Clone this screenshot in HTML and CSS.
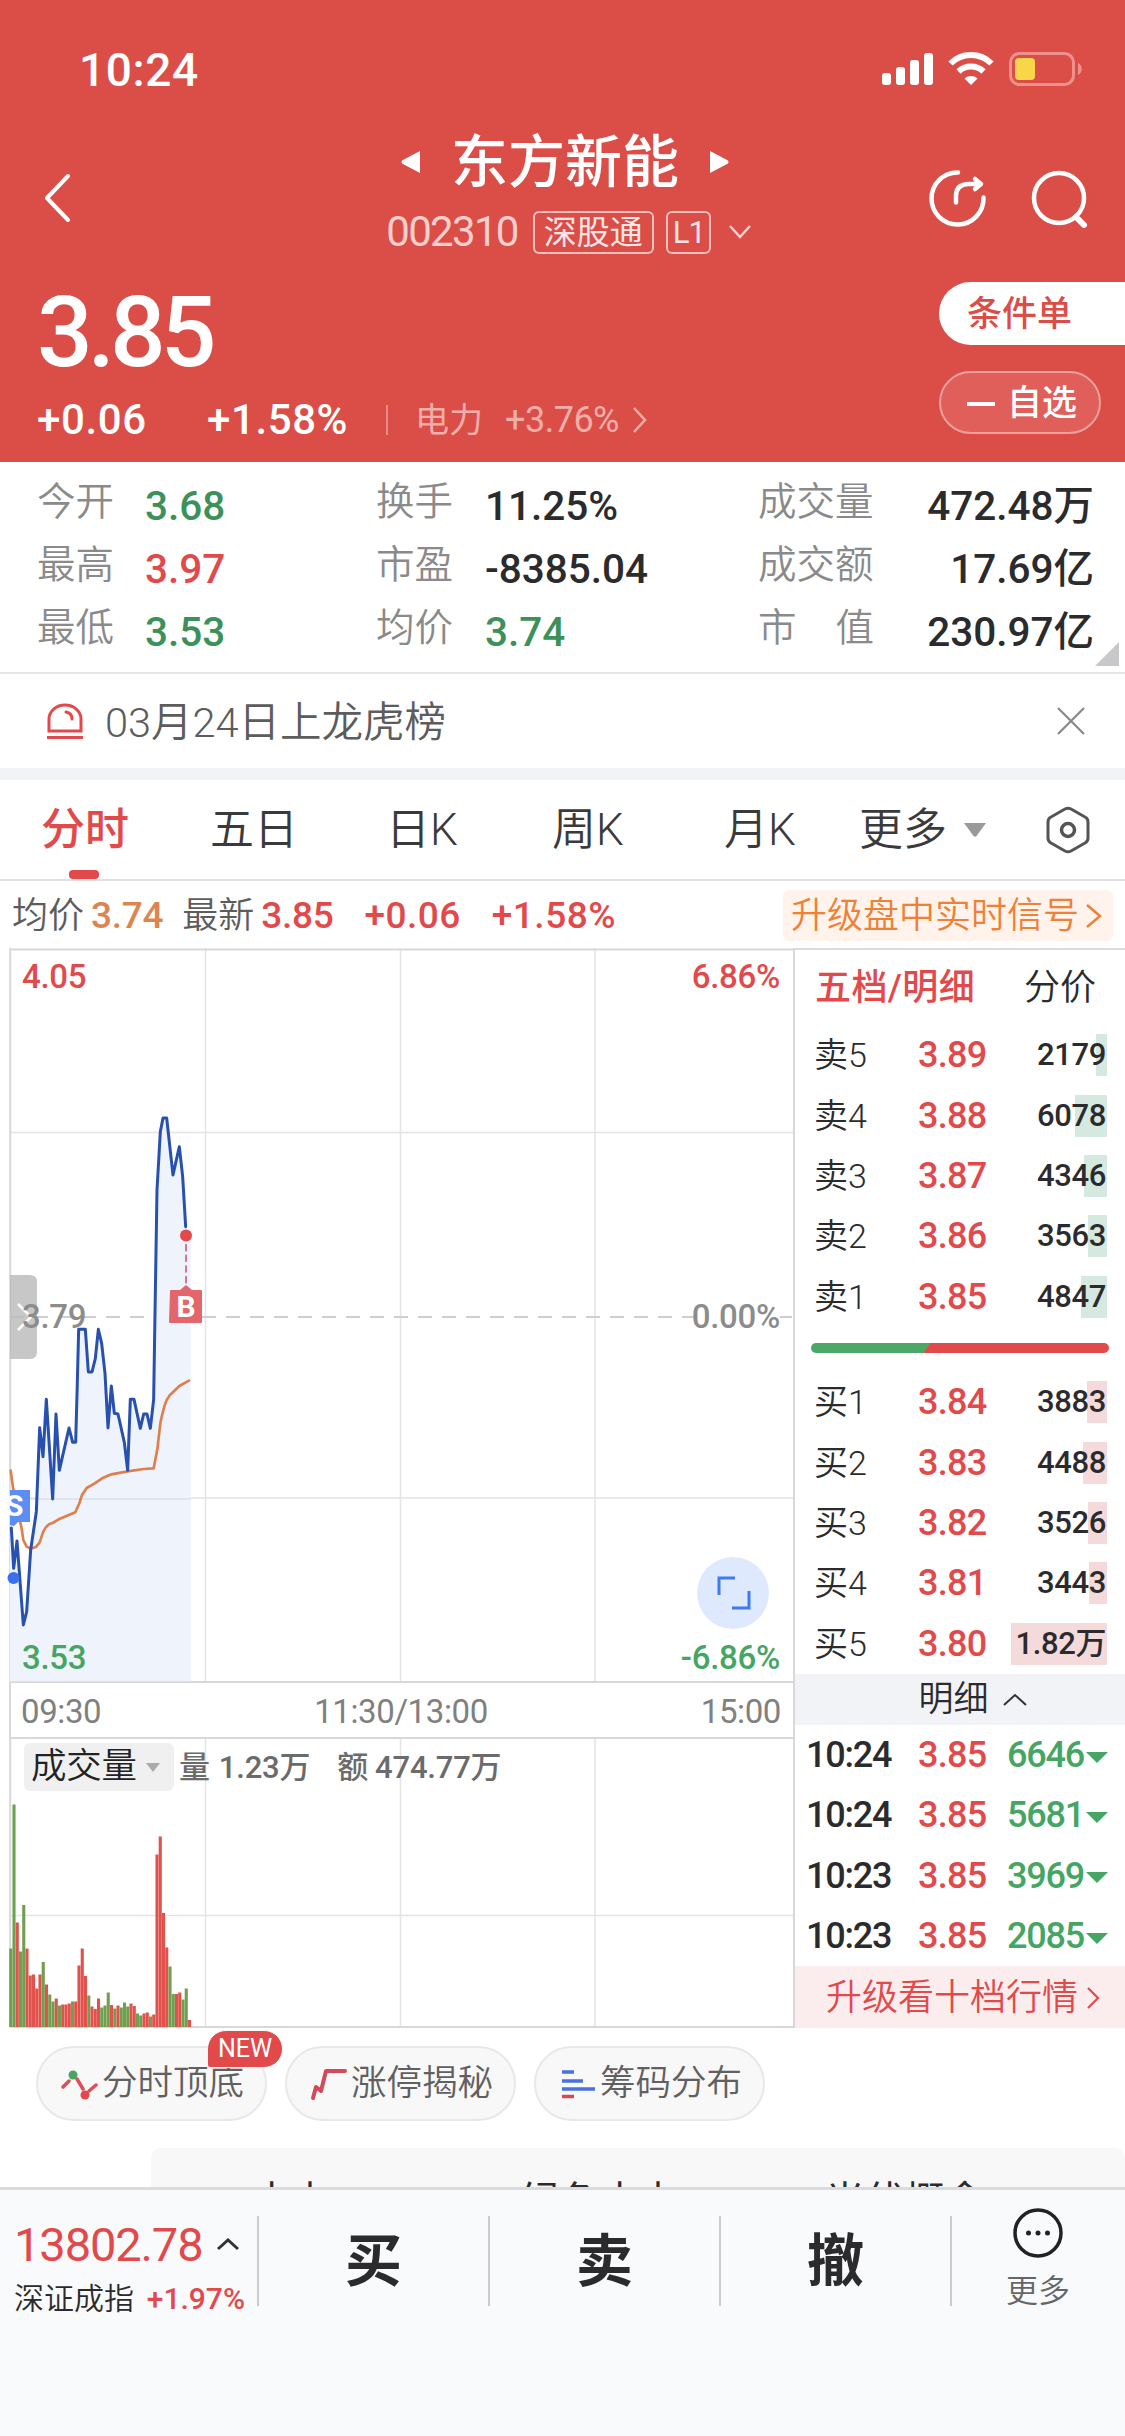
FILE: index.html
```html
<!DOCTYPE html>
<html lang="zh-CN">
<head>
    <meta charset="UTF-8">
    <meta name="viewport" content="width=device-width, initial-scale=1.0">
    <title>东方新能 002310</title>
    <link rel="stylesheet" href="styles.css">
</head>
<body>
    <header class="header">
        <div class="status">
            <span class="clock">10:24</span>
            <svg class="status-icons" width="204" height="36" viewBox="0 0 204 36">
                <g fill="#fff">
                    <rect x="2" y="21" width="9" height="12" rx="3"/>
                    <rect x="16" y="15" width="9" height="18" rx="3"/>
                    <rect x="30" y="8" width="9" height="25" rx="3"/>
                    <rect x="44" y="1" width="9" height="32" rx="3"/>
                    <path d="M91 33l-6.500-6.500a10 10 0 0 1 13 0z"/>
                </g>
                <path d="M78.500 19.500a18 18 0 0 1 25 0M70.500 11.500a29 29 0 0 1 41 0" fill="none" stroke="#fff" stroke-width="6"/>
                <rect x="130.500" y="1.500" width="63" height="31" rx="9" fill="none" stroke="#ee918c" stroke-width="3"/>
                <rect x="135" y="6" width="20" height="22" rx="4" fill="#f7d64a"/>
                <path d="M198 11c5 2 5 10 0 12z" fill="#ee918c"/>
            </svg>
        </div>
        <div class="nav">
            <svg class="back" width="30" height="50" viewBox="0 0 30 50"><path d="M26 3L5 25l21 22" fill="none" stroke="#fff" stroke-width="4" stroke-linecap="round" stroke-linejoin="round"/></svg>
            <div class="title">
                <div class="title-row">
                    <svg width="20" height="26" viewBox="0 0 20 26"><path d="M19 2v22L1 14.500q-1-1.500 0-3z" fill="#fff"/></svg>
                    <h1>东方新能</h1>
                    <svg width="20" height="26" viewBox="0 0 20 26"><path d="M1 2v22l18-9.500q1-1.500 0-3z" fill="#fff"/></svg>
                </div>
                <div class="code-row">
                    <span class="code">002310</span>
                    <span class="tag">深股通</span>
                    <span class="tag tag-level">L1</span>
                    <svg width="24" height="16" viewBox="0 0 24 16"><path d="M2 2l10 11L22 2" fill="none" stroke="#f6d0ce" stroke-width="2.500"/></svg>
                </div>
            </div>
            <div class="nav-icons">
                <svg width="60" height="60" viewBox="0 0 60 60" fill="none" stroke="#fff" stroke-width="4.500" stroke-linecap="round" stroke-linejoin="round">
                    <path d="M30 4.500A26 26 0 1 0 55.500 29.500M28 34.500V28q0-12 13-12h9M47 11l6 5-6 5"/>
                </svg>
                <svg width="60" height="60" viewBox="0 0 60 60" fill="none" stroke="#fff" stroke-width="4.500" stroke-linecap="round">
                    <circle cx="29" cy="30" r="25"/><path d="M46 49l8 8" stroke-width="6"/>
                </svg>
            </div>
        </div>
        <div class="quote">
            <div class="quote-main">
                <div class="price">3.85</div>
                <div class="change">
                    <span class="diff">+0.06</span>
                    <span class="pct">+1.58%</span>
                    <span class="sector">电力</span>
                    <span class="sector-pct">+3.76%</span>
                    <svg width="16" height="30" viewBox="0 0 16 30"><path d="M2 3l11 12L2 27" fill="none" stroke="#efaeaa" stroke-width="2.500"/></svg>
                </div>
            </div>
            <div class="quote-actions">
                <div class="pill pill-solid">条件单</div>
                <div class="pill pill-line"><i class="minus"></i>自选</div>
            </div>
        </div>
    </header>

    <section class="stats">
        <span class="k">今开</span><span class="v green">3.68</span>
        <span class="k">换手</span><span class="v">11.25%</span>
        <span class="k">成交量</span><span class="v right">472.48万</span>
        <span class="k">最高</span><span class="v red">3.97</span>
        <span class="k">市盈</span><span class="v">-8385.04</span>
        <span class="k">成交额</span><span class="v right">17.69亿</span>
        <span class="k">最低</span><span class="v green">3.53</span>
        <span class="k">均价</span><span class="v green">3.74</span>
        <span class="k spread"><b>市</b><b>值</b></span><span class="v right">230.97亿</span>
        <i class="corner"></i>
    </section>

    <section class="notice">
        <svg width="38" height="38" viewBox="0 0 38 38" fill="none" stroke="#e2494b" stroke-width="3">
            <path d="M3 29V17a16 14 0 0 1 32 0v12zM1 35.500h36"/><path d="M20 10q6 1 6 7" stroke-linecap="round"/>
        </svg>
        <span class="notice-text">03月24日上龙虎榜</span>
        <svg width="28" height="28" viewBox="0 0 28 28"><path d="M1 1l26 26M27 1L1 27" stroke="#888" stroke-width="2.200"/></svg>
    </section>

    <nav class="tabs">
        <span class="tab active">分时</span>
        <span class="tab">五日</span>
        <span class="tab">日K</span>
        <span class="tab">周K</span>
        <span class="tab">月K</span>
        <span class="tab more">更多<svg width="22" height="14" viewBox="0 0 22 14"><path d="M0 0h22L12.500 13q-1.500 1.500-3 0z" fill="#999"/></svg></span>
        <svg class="gear" width="44" height="48" viewBox="0 0 44 48" fill="none" stroke="#555" stroke-width="3" stroke-linejoin="round">
            <path d="M19 3q3-1.500 6 0l14 8q3 1.500 3 5v16q0 3.500-3 5l-14 8q-3 1.500-6 0L5 37q-3-1.500-3-5V16q0-3.500 3-5z"/><circle cx="22" cy="24" r="6.500" stroke-width="3.500"/>
        </svg>
    </nav>

    <section class="summary">
        <span class="sk">均价</span><span class="sv orange">3.74</span>
        <span class="sk">最新</span><span class="sv red">3.85</span>
        <span class="sv red gap">+0.06</span>
        <span class="sv red gap">+1.58%</span>
        <span class="signal">升级盘中实时信号<svg width="18" height="26" viewBox="0 0 18 26"><path d="M2 2l13 11L2 24" fill="none" stroke="#ee8136" stroke-width="2.500"/></svg></span>
    </section>

    <main class="market">
        <div class="charts">
            <svg class="plot" width="795" height="735" viewBox="0 0 795 735">
                <g stroke="#e4e4e6" stroke-width="1.500">
                    <path d="M205.500 0v735M400.500 0v735M595 0v735M10 184.500h784M10 550h784"/>
                    <path d="M10 1.500h784M10.200 0v735M10 734h784M794 0v735" stroke="#d8d8da" stroke-width="2"/>
                </g>
                <path d="M10 369h784" stroke="#cfcfd2" stroke-width="1.800" stroke-dasharray="14 10"/>
                <!-- price series, in thirds of a pixel -->
                <g transform="scale(.33333)" fill="none" stroke-linejoin="round" stroke-linecap="round">
                    <path d="M30 1560 35 1746 41 1861 51 1779 70 2031 80 1991 92 1806 109 1691 119 1439 129 1526 139 1354 158 1653 168 1398 178 1567 207 1440 218 1483 227 1483 231 1340 236 1144H256L265 1272H276L286 1231 295 1144 305 1186 315 1276 324 1440 334 1314 343 1396 354 1398 373 1483 383 1567 391 1354H402L421 1441 431 1398H441L451 1441 461 1354 465 1096 471 726 481 551 489 510H500L519 681 538 596 548 686 557 836 572 860V2200H30z" fill="#eef3fc"/>
                    <path d="M30 1653H572" stroke="#dcdfe6" stroke-width="4"/>
                    <path d="M32 1568 39 1618 52 1690 64 1736 70 1776 80 1796 92 1802 109 1796 119 1783 129 1753Q137 1735 147 1729L158 1725 176 1714 226 1693 238 1666 246 1641 260 1620 284 1606 310 1589 334 1579 383 1570 431 1563 461 1561 472 1504 481 1426Q490 1380 500 1356L510 1341 538 1314 567 1298" stroke="#e17e4e" stroke-width="8"/>
                    <path d="M34 1740 41 1861 51 1779 70 2031 80 1991 92 1806 109 1691 119 1439 129 1526 139 1354 158 1653 168 1398 178 1567 207 1440 218 1483 227 1483 231 1340 236 1144H256L265 1272H276L286 1231 295 1144 305 1186 315 1276 324 1440 334 1314 343 1396 354 1398 373 1483 383 1567 391 1354H402L421 1441 431 1398H441L451 1441 461 1354 465 1096 471 726 481 551 489 510H500L519 681 538 596 548 686 557 836" stroke="#2850ae" stroke-width="9"/>
                    <path d="M558 890V1010" stroke="#d05c82" stroke-width="5" stroke-dasharray="18 14"/>
                </g>
                <circle cx="186" cy="287.500" r="6" fill="#e2494b"/>
                <path d="M170 343q0-1 1-1h9l6-5 6 5h9q1 0 1 1v31q0 1-1 1h-31q-1 0-1-1z" fill="#e4666d"/>
                <text class="mark" x="186" y="369" text-anchor="middle">B</text>
                <path d="M10 542h20v32H18l-4 4-4-1z" fill="#5b8df2"/>
                <svg x="9" y="540" width="30" height="40"><text class="mark" x="-4" y="28">S</text></svg>
                <circle cx="13.500" cy="630" r="6" fill="#3a70ee"/>
                <path d="M10 327h20q7 0 7 7v70q0 7-7 7H10z" fill="#b9b9b9" opacity=".8"/>
                <path d="M18 356l13 13-13 13" fill="none" stroke="#fff" stroke-width="2.500"/>
                <g class="axis">
                    <text x="22" y="40" class="fill-red">4.05</text>
                    <text x="780" y="40" class="fill-red" text-anchor="end">6.86%</text>
                    <text x="22" y="380">3.79</text>
                    <rect x="698" y="362" width="82" height="14" fill="#fff"/>
                    <text x="780" y="380" text-anchor="end">0.00%</text>
                    <text x="22" y="721" class="fill-green">3.53</text>
                    <text x="780" y="721" class="fill-green" text-anchor="end">-6.86%</text>
                </g>
                <circle cx="733" cy="645" r="36" fill="#dfe9fd"/>
                <path d="M719 647v-17h16M732 660h17v-17" fill="none" stroke="#3f7bf0" stroke-width="3"/>
            </svg>
            <div class="times"><span>09:30</span><span>11:30/13:00</span><span>15:00</span></div>
            <div class="volume">
                <svg class="plot" width="795" height="291" viewBox="0 0 795 291">
                    <path d="M205.500 0v288M400.500 0v288M595 0v288M10 176.500h784" stroke="#e4e4e6" stroke-width="1.500"/>
                    <path d="M10.200 0v288M10 288h784M794 0v289" stroke="#d8d8da" stroke-width="2"/>
                    <g id="bars"></g>
                </svg>
                <div class="volume-head">
                    <span class="picker">成交量<svg width="14" height="9" viewBox="0 0 14 9"><path d="M0 0h14L7 9z" fill="#aaa"/></svg></span>
                    <span>量</span><span class="n1">1.23万</span><span class="n2">额</span><span>474.77万</span>
                </div>
            </div>
        </div>

        <aside class="book">
            <div class="book-head"><b>五档/明细</b><span>分价</span></div>
            <div class="orders sell">
                <div class="row"><span>卖5</span><span class="p">3.89</span><span class="q"><i style="width:11px"></i>2179</span></div>
                <div class="row"><span>卖4</span><span class="p">3.88</span><span class="q"><i style="width:32px"></i>6078</span></div>
                <div class="row"><span>卖3</span><span class="p">3.87</span><span class="q"><i style="width:23px"></i>4346</span></div>
                <div class="row"><span>卖2</span><span class="p">3.86</span><span class="q"><i style="width:19px"></i>3563</span></div>
                <div class="row"><span>卖1</span><span class="p">3.85</span><span class="q"><i style="width:26px"></i>4847</span></div>
            </div>
            <div class="ratio"></div>
            <div class="orders buy">
                <div class="row"><span>买1</span><span class="p">3.84</span><span class="q"><i style="width:20px"></i>3883</span></div>
                <div class="row"><span>买2</span><span class="p">3.83</span><span class="q"><i style="width:24px"></i>4488</span></div>
                <div class="row"><span>买3</span><span class="p">3.82</span><span class="q"><i style="width:19px"></i>3526</span></div>
                <div class="row"><span>买4</span><span class="p">3.81</span><span class="q"><i style="width:18px"></i>3443</span></div>
                <div class="row"><span>买5</span><span class="p">3.80</span><span class="q"><i style="width:96px"></i>1.82万</span></div>
            </div>
            <div class="detail-head">明细<svg width="24" height="13" viewBox="0 0 24 13"><path d="M1 12L12 2l11 10" fill="none" stroke="#333" stroke-width="2"/></svg></div>
            <div class="ticks">
                <div class="row"><span>10:24</span><span class="p">3.85</span><span class="t">6646<i></i></span></div>
                <div class="row"><span>10:24</span><span class="p">3.85</span><span class="t">5681<i></i></span></div>
                <div class="row"><span>10:23</span><span class="p">3.85</span><span class="t">3969<i></i></span></div>
                <div class="row"><span>10:23</span><span class="p">3.85</span><span class="t">2085<i></i></span></div>
            </div>
            <div class="upgrade">升级看十档行情<svg width="14" height="24" viewBox="0 0 14 24"><path d="M2 2l10 10L2 22" fill="none" stroke="#e2494b" stroke-width="2.200"/></svg></div>
        </aside>
    </main>

    <section class="chips">
        <div class="chip">
            <svg width="38" height="34" viewBox="0 0 38 34" stroke="#db4e5a" stroke-width="3.500" stroke-linecap="round"><path d="M3 20l6-6M17 12l6 10M29 24l7-6"/><circle cx="13" cy="8" r="4.500" fill="#45a563" stroke="none"/><circle cx="25" cy="28" r="4.500" fill="#e2494b" stroke="none"/></svg>
            分时顶底<em class="new">NEW</em>
        </div>
        <div class="chip">
            <svg width="38" height="34" viewBox="0 0 38 34"><path d="M4 31l3-11 5 4 5-20h19" fill="none" stroke="#d24a57" stroke-width="4" stroke-linecap="round" stroke-linejoin="round"/></svg>
            涨停揭秘
        </div>
        <div class="chip">
            <svg width="38" height="34" viewBox="0 0 38 34" stroke-width="3.500"><path d="M4 5h12M4 14h21M4 22h33" stroke="#4a72dc"/><path d="M4 29.500h12" stroke="#d24a57"/></svg>
            筹码分布
        </div>
    </section>
    <div class="concepts"><span>电力</span><span>绿色电力</span><span>光伏概念</span></div>

    <footer class="bottom">
        <div class="index">
            <div class="index-value">13802.78<svg width="24" height="13" viewBox="0 0 24 13"><path d="M2 11L12 2l10 9" fill="none" stroke="#333" stroke-width="3"/></svg></div>
            <div class="index-name">深证成指<span>+1.97%</span></div>
        </div>
        <div class="trade">买</div>
        <div class="trade">卖</div>
        <div class="trade">撤</div>
        <div class="bottom-more">
            <svg width="52" height="52" viewBox="0 0 52 52"><circle cx="26" cy="26" r="23" fill="none" stroke="#222" stroke-width="3.500"/><g fill="#222"><circle cx="16.500" cy="26" r="2.500"/><circle cx="26" cy="26" r="2.500"/><circle cx="35.500" cy="26" r="2.500"/></g></svg>
            更多
        </div>
    </footer>
    <script src="volume.js"></script>
</body>
</html>
```

FILE: styles.css
```css
* {
    box-sizing: border-box;
}
body {
    margin: 0;
    width: 1125px;
    height: 2436px;
    overflow: hidden;
    background: #fff;
    color: #2b2b2d;
    font-family: Roboto, "Noto Sans CJK SC", sans-serif;
    line-height: 1;
    white-space: nowrap;
}
svg {
    display: block;
    flex: none;
}
.red { color: #e2494b; }
.green { color: #3c915b; }
.orange { color: #dd8550; }

/* header */
.header {
    height: 462px;
    background: #db4e48;
    color: #fff;
}
.status {
    display: flex;
    justify-content: space-between;
    align-items: center;
    height: 125px;
    padding: 14px 41px 0 79px;
}
.clock {
    font-size: 46px;
    font-weight: 500;
    letter-spacing: .6px;
}
.nav {
    display: grid;
    grid-template-columns: 1fr auto 1fr;
    align-items: center;
    height: 146px;
    padding: 0 35px 0 42px;
}
.title {
    align-self: start;
    padding: 7px 0 0 6px;
}
.title-row {
    display: flex;
    align-items: center;
    justify-content: center;
    gap: 30px;
    height: 60px;
    margin-right: 8px;
}
.title-row h1 {
    margin: 0;
    font-size: 57px;
    font-weight: 500;
}
.code-row {
    display: flex;
    align-items: center;
    height: 44px;
    margin-top: 18px;
}
.code {
    font-size: 42px;
    letter-spacing: -1.7px;
    color: #f6cfcd;
    margin-right: 15px;
}
.tag {
    height: 43px;
    padding: 0 9px;
    border: 2px solid #f3bfbc;
    border-radius: 6px;
    font-size: 33px;
    line-height: 39px;
    margin-right: 12px;
    color: #fbe6e5;
}
.tag-level {
    width: 45px;
    padding: 0 5px;
    font-size: 31px;
    margin-right: 17px;
    letter-spacing: -1px;
}
.nav-icons {
    display: flex;
    justify-content: flex-end;
    gap: 42px;
}
.quote {
    display: flex;
    justify-content: space-between;
    height: 191px;
}
.quote-main {
    padding: 12px 0 0 37px;
}
.price {
    font-size: 98px;
    font-weight: 500;
    line-height: 100px;
    letter-spacing: -5px;
}
.change {
    display: flex;
    align-items: center;
    height: 44px;
    margin-top: 15px;
    font-size: 42px;
    letter-spacing: .6px;
}
.diff, .pct {
    font-weight: 500;
}
.diff {
    width: 170px;
}
.pct {
    width: 181px;
    border-right: 2px solid #e58d89;
    line-height: 30px;
    margin-right: 27px;
}
.sector {
    font-size: 34px;
    width: 90px;
    color: #efaeaa;
    letter-spacing: 0;
}
.sector-pct {
    font-size: 36px;
    width: 127px;
    color: #efaeaa;
    letter-spacing: -.5px;
}
.quote-actions {
    width: 186px;
    padding-top: 11px;
}
.pill {
    display: flex;
    align-items: center;
    height: 63px;
    padding: 2px 0 0 28px;
    font-size: 35px;
    font-weight: 500;
}
.pill-solid {
    background: #fff;
    color: #db4e48;
    border-radius: 32px 0 0 32px;
}
.pill-line {
    width: 162px;
    margin-top: 26px;
    padding-left: 26px;
    border: 2px solid #ee9f9b;
    border-radius: 32px;
    background: #e05f5a;
}
.minus {
    width: 28px;
    height: 4px;
    margin-right: 12px;
    background: #fff;
}

/* key figures */
.stats {
    position: relative;
    display: grid;
    grid-template-columns: 108px 231px 109px 273px 118px 1fr;
    grid-auto-rows: 63px;
    align-items: center;
    height: 212px;
    padding: 10px 31px 0 37px;
    border-bottom: 2px solid #e6e6e8;
}
.k {
    font-size: 38.500px;
    font-weight: 350;
    color: #8a8a8a;
    transform: translateY(-1px);
}
.spread {
    display: flex;
    justify-content: space-between;
    width: 116px;
}
.spread b {
    font-weight: 350;
}
.v {
    font-size: 40.500px;
    font-weight: 500;
    letter-spacing: 0;
    padding-top: 5px;
}
.right {
    text-align: right;
}
.corner {
    position: absolute;
    right: 6px;
    bottom: 6px;
    border: solid transparent;
    border-width: 12px;
    border-right-color: #c8c8ca;
    border-bottom-color: #c8c8ca;
}
.notice {
    display: flex;
    align-items: center;
    height: 106px;
    padding: 0 40px 0 46px;
    border-bottom: 12px solid #f2f3f7;
}
.notice-text {
    flex: 1;
    padding: 4px 0 0 21px;
    font-size: 41.500px;
    font-weight: 350;
    color: #5c5c5c;
}

/* period tabs */
.tabs {
    display: flex;
    align-items: center;
    height: 101px;
    border-bottom: 2px solid #e0e0e2;
    padding-left: 41px;
    color: #3a3a3c;
}
.tab {
    position: relative;
    width: 169px;
    font-size: 44px;
    font-weight: 350;
}
.tab:nth-child(2) { width: 176px; }
.tab:nth-child(3) { width: 166px; }
.tab:nth-child(4) { width: 172px; }
.tab:nth-child(5) { width: 135px; }
.tab.active {
    color: #e2494b;
    font-weight: 500;
}
.active::after {
    content: "";
    position: absolute;
    left: 28px;
    bottom: -27px;
    width: 30px;
    height: 9px;
    border-radius: 4px;
    background: #e2494b;
}
.more {
    display: flex;
    align-items: center;
    gap: 17px;
    width: 187px;
}
.summary {
    display: flex;
    align-items: center;
    height: 67px;
    padding: 2px 12px 0;
}
.sk {
    font-size: 36px;
    font-weight: 350;
    color: #5c5c5c;
    margin-right: 7px;
}
.sv {
    font-size: 37px;
    font-weight: 500;
    letter-spacing: -.3px;
    margin-right: 19px;
}
.gap {
    margin: 0 19px 0 12px;
    letter-spacing: .5px;
}
.signal {
    display: flex;
    align-items: center;
    gap: 6px;
    width: 330px;
    height: 51px;
    margin-left: auto;
    padding-left: 8px;
    border-radius: 6px;
    background: #fff3ec;
    color: #ee8136;
    font-size: 36px;
    font-weight: 350;
}

/* charts */
.market {
    display: grid;
    grid-template-columns: 795px 330px;
    height: 1080px;
}
.mark {
    font-size: 30px;
    font-weight: 700;
    fill: #fff;
}
.axis {
    font-size: 33px;
    font-weight: 500;
    letter-spacing: -.3px;
    fill: #8c8c8c;
}
.fill-red { fill: #e2494b; }
.fill-green { fill: #45a563; }
.times {
    display: flex;
    align-items: center;
    justify-content: space-between;
    height: 56px;
    margin-left: 9px;
    padding: 3px 12px 0 10px;
    border: solid #d8d8da;
    border-width: 0 2px 2px;
    color: #808080;
    font-size: 33px;
    letter-spacing: -.4px;
}
.volume {
    position: relative;
}
.volume-head {
    position: absolute;
    top: 4px;
    left: 24px;
    display: flex;
    align-items: center;
    height: 48px;
    font-size: 31px;
    font-weight: 500;
    letter-spacing: -.2px;
    color: #6b6b6b;
}
.picker {
    display: flex;
    align-items: center;
    gap: 9px;
    width: 150px;
    height: 48px;
    margin-right: 5px;
    padding-left: 7px;
    border-radius: 6px;
    background: #f0f0f0;
    color: #222;
    font-size: 35.500px;
    font-weight: 350;
}
.n1 { margin: 0 27px 0 9px; }
.n2 { margin-right: 7px; }

/* order book */
.book {
    border-top: 2px solid #dcdcde;
    font-size: 34px;
    font-weight: 350;
}
.book-head {
    display: flex;
    justify-content: space-between;
    align-items: center;
    height: 75px;
    padding: 0 29px 0 20px;
    font-size: 36px;
}
.book-head b {
    color: #e2494b;
    font-weight: 500;
    letter-spacing: .4px;
}
.row {
    display: grid;
    grid-template-columns: 104px 80px 1fr;
    align-items: center;
    height: 60.4px;
    padding: 0 18px 0 19px;
}
.p {
    font-size: 36px;
    font-weight: 500;
    color: #e2494b;
    letter-spacing: -.7px;
}
.q {
    position: relative;
    padding-right: 1px;
    text-align: right;
    font-size: 31px;
    font-weight: 500;
    line-height: 42px;
    letter-spacing: -.4px;
}
.q i {
    position: absolute;
    z-index: -1;
    right: 0;
    top: 0;
    height: 42px;
    background: #d6e9e0;
}
.buy .q i {
    background: #f5dadc;
}
.ratio {
    height: 10px;
    margin: 16px 16px 19px;
    border-radius: 5px;
    background: linear-gradient(125deg, #4ba866 39%, #e2494b 39.300%);
}
.detail-head {
    display: flex;
    align-items: center;
    justify-content: center;
    gap: 14px;
    height: 51px;
    padding-left: 25px;
    background: #f2f3f7;
    font-size: 35px;
}
.ticks .row {
    padding: 0 17px 0 11px;
    grid-template-columns: 112px 89px 1fr;
    font-size: 36px;
    font-weight: 500;
    letter-spacing: -1.200px;
}
.t {
    display: flex;
    align-items: center;
    justify-content: space-between;
    color: #45a563;
}
.t i {
    border: 11px solid transparent;
    border-bottom: 0;
    border-top-color: #45a563;
    margin-top: 4px;
}
.upgrade {
    display: flex;
    align-items: center;
    gap: 8px;
    height: 62px;
    padding: 1px 0 0 31px;
    background: #fbedee;
    color: #e2494b;
    font-size: 36px;
}

/* tools under the chart */
.chips {
    display: flex;
    gap: 18px;
    height: 120px;
    padding: 18px 36px 0;
}
.chip {
    position: relative;
    display: flex;
    align-items: center;
    gap: 4px;
    width: 231px;
    height: 75px;
    padding: 1px 0 0 22px;
    border: 2px solid #e8e8e8;
    border-radius: 38px;
    background: #f8f8f8;
    color: #606060;
    font-size: 35.500px;
    font-weight: 350;
}
.new {
    position: absolute;
    top: -18px;
    right: -18px;
    width: 76px;
    height: 38px;
    border: 1px solid #f8f8f8;
    border-radius: 19px 19px 19px 3px;
    background: #e2494b;
    color: #fff;
    font-size: 25px;
    font-style: normal;
    font-weight: 400;
    line-height: 36px;
    text-align: center;
}
.concepts {
    display: grid;
    grid-template-columns: 268px 305px 1fr;
    height: 39px;
    margin-left: 151px;
    padding: 34px 0 0 101px;
    overflow: hidden;
    border-radius: 10px 10px 0 0;
    background: #f8f8f8;
    font-size: 40px;
}

/* trade bar */
.bottom {
    display: flex;
    height: 249px;
    border-top: 3px solid #dbdbdd;
    background: #f9fafc;
    padding-top: 26px;
}
.index {
    width: 259px;
    height: 90px;
    padding-left: 14px;
    border-right: 2px solid #ccc;
}
.index-value {
    display: flex;
    align-items: center;
    gap: 13px;
    height: 56px;
    color: #e2494b;
    font-size: 47px;
    letter-spacing: -1.100px;
}
.index-name {
    display: flex;
    align-items: center;
    justify-content: space-between;
    padding: 2px 12px 0 0;
    height: 52px;
    font-size: 30px;
    font-weight: 350;
}
.index-name span {
    color: #e2494b;
    font-weight: 500;
    letter-spacing: 0;
}
.trade {
    width: 231px;
    height: 90px;
    border-right: 2px solid #ccc;
    font-size: 57px;
    font-weight: 700;
    line-height: 92px;
    text-align: center;
}
.bottom-more {
    display: flex;
    flex-direction: column;
    align-items: center;
    gap: 16px;
    width: 172px;
    margin-top: -9px;
    color: #666;
    font-size: 32px;
    font-weight: 350;
}
```

FILE: volume.js
```javascript
// one bar per minute from 09:30: direction (g = down, r = up) and height
const volume = "g78.5 g222.5 r104.5 g75.5 g122 r78.5 r51.5 r52.5 r38.5 r52.5 g65 r42.5 g32.5 g25.5 r28.5 g21.5 r22.5 r22.5 r23.5 g25.5 r25.5 r61.5 r78.5 r51 g31.5 r20.5 r18 r28.5 g19.5 g21.5 g34.5 r22 g18.5 r21.5 g19.5 g24.5 g20.5 r23.5 r21 g13.5 g11.5 r13.5 r14.5 g10.5 r12.5 r172.5 r190.5 r114 r79.5 g60.5 g33 r33 r34.5 g27.5 g38.5 r7";
const step = 3.25;

document.getElementById("bars").innerHTML = volume.split(" ").map((bar, i) => {
    const h = Number(bar.slice(1));
    const color = bar[0] === "g" ? "#6fa04f" : "#e2524d";
    return `<rect x="${9.2 + i * step}" y="${288 - h}" width="3.1" height="${h}" fill="${color}"/>`;
}).join("");
```
